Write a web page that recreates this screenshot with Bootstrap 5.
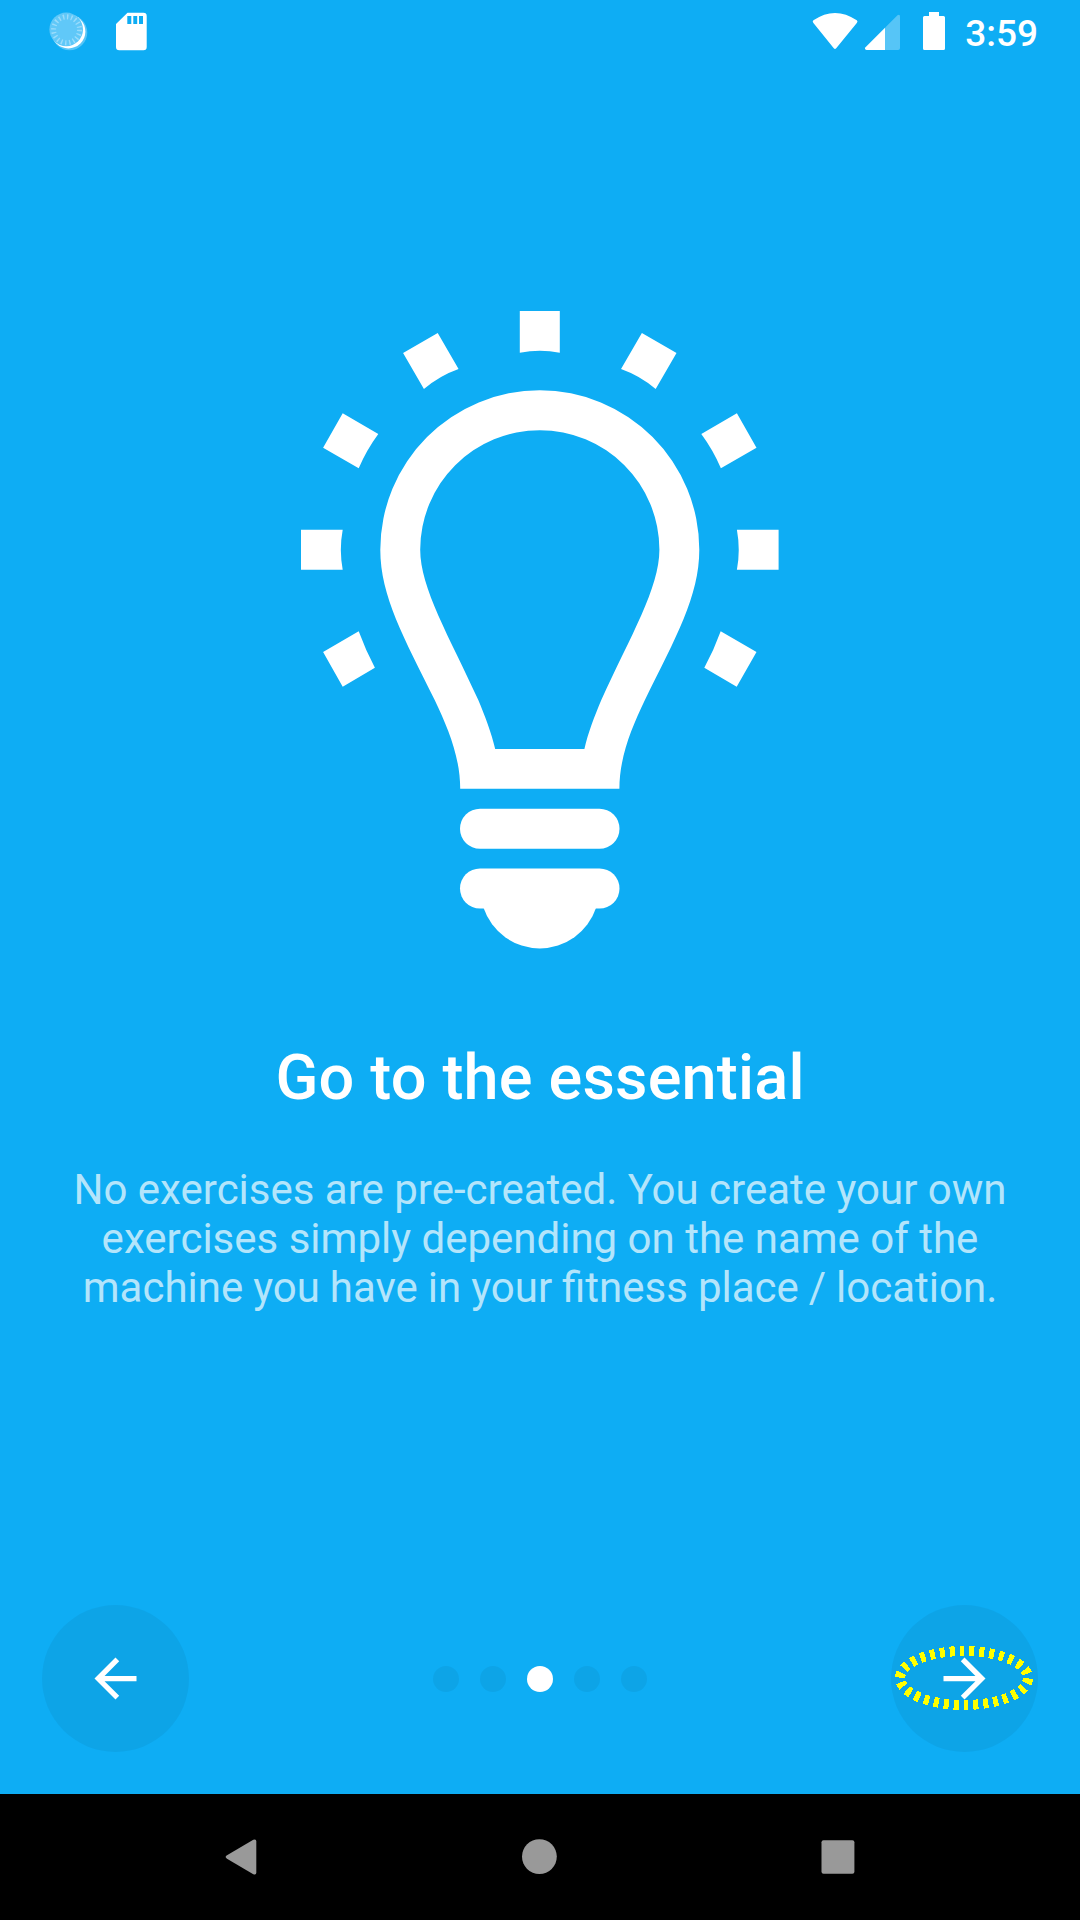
<!DOCTYPE html>
<html lang="en">
<head>
<meta charset="utf-8">
<meta name="viewport" content="width=device-width, initial-scale=1">
<title>Go to the essential</title>
<link href="https://cdn.jsdelivr.net/npm/bootstrap@5.3.0/dist/css/bootstrap.min.css" rel="stylesheet">
<style>
  body { font-family: Roboto, sans-serif; background: #0eadf4; }
  .screen { width: 1080px; height: 1920px; }
  .status-bar { height: 63px; padding-right: 42px; }
  .clock { font-size: 37px; font-weight: 500; line-height: 63px; padding-top: 2px; margin-left: 18px; }
  .bulb { margin-top: 247px; }
  .intro-title { font-size: 63px; font-weight: 500; line-height: 74px; letter-spacing: .18px; margin-top: 91px; }
  .intro-text { font-size: 42px; line-height: 49px; color: rgba(255,255,255,.7); margin-top: 50px; padding: 0 63px; }
  .tight-words { word-spacing: -.45px; }
  .pager { padding: 0 42px 42px; }
  .pager-btn { width: 147px; height: 147px; background: rgba(0,0,0,.05); }
  .pager-dots { gap: 21px; }
  .dot { width: 26px; height: 26px; background: rgba(0,0,0,.05); }
  .dot.active { background: #fff; }
  .tap-mark { left: 0; top: 0; }
  .nav-keys { height: 126px; }
</style>
</head>
<body>
<div class="screen d-flex flex-column overflow-hidden text-white">
  <header class="status-bar d-flex align-items-start justify-content-between flex-shrink-0">
    <svg width="160" height="63" viewBox="0 0 160 63">
      <circle cx="69.5" cy="32.5" r="17.800" fill="#fff" opacity=".3"/>
      <circle cx="68.400" cy="31.400" r="17" fill="#fff"/>
      <circle cx="66.200" cy="29.400" r="16.800" fill="#60c8f8"/>
      <circle cx="66.600" cy="29.800" r="13" fill="none" stroke="#9adcfb" stroke-width="5" stroke-dasharray="1.400 2.684"/>
      <path fill="#fff" fill-rule="evenodd" d="M127.500 12.700H143.500Q146.700 12.700 146.700 16V47Q146.700 50.300 143.500 50.300H119.300Q116 50.300 116 47V24ZM127.300 16V24H131.300V16ZM133.300 16V24H137.200V16ZM139 16V24H143V16Z"/>
    </svg>
    <div class="d-flex">
      <svg width="137" height="63" viewBox="810 0 137 63" fill="#fff">
        <path d="M813.400 23Q812 21.600 813.400 20.300Q835 5.500 856.800 20.300Q858.200 21.600 856.800 23L836.200 48.300Q835 49.700 833.800 48.300Z"/>
        <path d="M885 27.700V50H866.500Q864 49.500 865.500 47.300Z"/>
        <path opacity=".3" d="M885 27.700L897.500 15.200Q900 13.800 900 16.500V48Q900 50 898 50H885Z"/>
        <path d="M929 12H939V16H943.500Q945 16 945 17.500V48.500Q945 50 943.500 50H924.500Q923 50 923 48.500V17.500Q923 16 924.500 16H929Z"/>
      </svg>
      <div class="clock">3:59</div>
    </div>
  </header>

  <main class="flex-grow-1 d-flex flex-column align-items-center text-center">
    <svg class="bulb" width="482" height="640" viewBox="299 310 482 640" fill="#fff">
      <defs>
        <path id="ray" d="M519.800 311H559.800V352.700Q540 349 519.800 352.700Z"/>
      </defs>
      <use href="#ray"/>
      <use href="#ray" transform="rotate(30 539.800 549.800)"/>
      <use href="#ray" transform="rotate(90 539.800 549.800)"/>
      <use href="#ray" transform="rotate(-30 539.800 549.800)"/>
      <use href="#ray" transform="rotate(-90 539.800 549.800)"/>
      <path d="M342.700 413.300L378.300 434Q366.500 450 358.700 468.300L323.100 447.700Z"/>
      <path d="M736.900 413.300L701.300 434Q713.100 450 720.900 468.300L756.500 447.700Z"/>
      <path d="M323.100 652L358.700 631.300Q365.500 650 374.900 667.700L342.700 686.700Z"/>
      <path d="M756.500 652L720.700 631.300Q714 650 704.300 667.700L736.700 686.700Z"/>
      <path fill-rule="evenodd" d="M460.200 788.800C460.200 757 448 728 434.700 700C404 638 380.300 596 380.300 549.800A159.500 159.500 0 0 1 699.300 549.800C699.300 596 675.600 638 644.900 700C631.600 728 619.400 757 619.400 788.800ZM495.200 749H584.400C588 733 594.600 716 601.300 700C630.600 636 659.400 588 659.400 549.800A119.600 119.600 0 0 0 420.200 549.800C420.200 588 449 636 478.300 700C485 716 491.500 733 495.200 749Z"/>
      <rect x="460" y="808.700" width="159.500" height="40.100" rx="20"/>
      <rect x="460" y="868.500" width="159.500" height="40.100" rx="20"/>
      <path d="M483.600 908A59.300 59.300 0 0 0 596 908Z"/>
    </svg>
    <h1 class="intro-title mb-0">Go to the essential</h1>
    <p class="intro-text mb-0">No exercises are pre-created. You create your own<br>exercises simply depending on the name of the<br><span class="tight-words">machine you have in your fitness place / location.</span></p>
  </main>

  <div class="pager d-flex align-items-center justify-content-between">
    <button class="pager-btn btn rounded-circle border-0 p-0 d-flex align-items-center justify-content-center" aria-label="Previous">
      <svg width="63" height="63" viewBox="0 0 24 24" fill="#fff"><path d="M20 11H7.830l5.590-5.590L12 4l-8 8 8 8 1.410-1.410L7.830 13H20v-2z"/></svg>
    </button>
    <div class="pager-dots d-flex">
      <span class="dot rounded-circle"></span>
      <span class="dot rounded-circle"></span>
      <span class="dot active rounded-circle"></span>
      <span class="dot rounded-circle"></span>
      <span class="dot rounded-circle"></span>
    </div>
    <button class="pager-btn btn rounded-circle border-0 p-0 d-flex align-items-center justify-content-center position-relative" aria-label="Next">
      <svg width="63" height="63" viewBox="0 0 24 24" fill="#fff"><path d="M12 4l-1.410 1.410L16.170 11H4v2h12.170l-5.580 5.590L12 20l8-8z"/></svg>
      <svg class="tap-mark position-absolute" width="147" height="147" viewBox="891 1605 147 147" shape-rendering="crispEdges">
        <ellipse cx="964" cy="1678" rx="64" ry="27" pathLength="300" fill="none" stroke="#ff0" stroke-width="10" stroke-dasharray="5 5" stroke-dashoffset="-.5"/>
      </svg>
    </button>
  </div>

  <footer class="nav-keys bg-black flex-shrink-0">
    <svg class="d-block" width="1080" height="126" viewBox="0 1794 1080 126" fill="#999">
      <path d="M227 1855.300L253.300 1839.800Q256.300 1838.500 256.300 1841.500V1872.500Q256.300 1875.500 253.300 1874.200L227 1858.700Q224.300 1857 227 1855.300Z"/>
      <circle cx="539.400" cy="1856.600" r="17.400"/>
      <rect x="821.500" y="1840.300" width="32.900" height="33.400" rx="2"/>
    </svg>
  </footer>
</div>
<script src="https://cdn.jsdelivr.net/npm/bootstrap@5.3.0/dist/js/bootstrap.bundle.min.js"></script>
</body>
</html>
